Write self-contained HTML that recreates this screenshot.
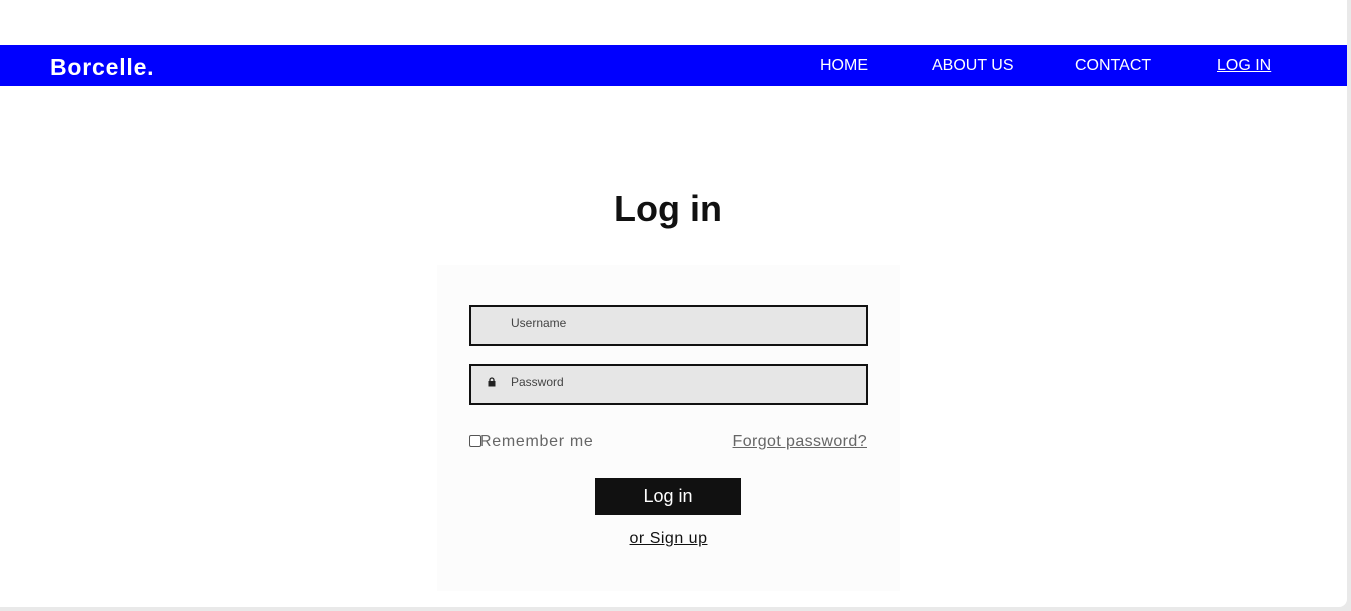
<!DOCTYPE html>
<html><head><style>
body{margin:0;width:1351px;height:611px;background:#e9e9e9;font-family:"Liberation Sans",sans-serif;overflow:hidden;position:relative}
.page{position:absolute;left:0;top:0;width:1347px;height:607px;background:#fff;border-bottom-right-radius:8px;overflow:hidden}
.nav{position:absolute;top:45px;left:0;width:1347px;height:41px;background:#0000ff;color:#fff}
.logo{position:absolute;left:50px;top:9px;font-weight:bold;font-size:23px;letter-spacing:0.8px}
.nav a{position:absolute;top:12px;font-size:16px;color:#fff;text-decoration:none}
h1{position:absolute;top:188px;left:0;width:1336px;margin:0;text-align:center;font-size:36px;font-weight:bold;color:#111}
.card{position:absolute;left:437px;top:265px;width:463px;height:326px;background:#fcfcfc}
.inp{position:absolute;left:32px;width:395px;height:37px;border:2px solid #111;background:#e6e6e6;font-size:12px;color:#444}
.inp span{position:absolute;left:40px;top:9px}
.row{position:absolute;top:168px;font-size:16px;color:#666;letter-spacing:0.4px}
.btn{position:absolute;left:158px;top:213px;width:146px;height:37px;background:#111;color:#fff;font-size:18px;text-align:center;line-height:37px}
.su{position:absolute;top:265px;left:0;width:463px;text-align:center;font-size:16px;color:#111;text-decoration:underline;letter-spacing:0.5px}
</style></head><body>
<div class="page">
<div class="nav"><div class="logo">Borcelle.</div>
<a style="left:820px">HOME</a><a style="left:932px">ABOUT US</a><a style="left:1075px">CONTACT</a><a style="left:1217px;text-decoration:underline">LOG IN</a></div>
<h1>Log in</h1>
<div class="card">
<div class="inp" style="top:40px"><span>Username</span></div>
<div class="inp" style="top:99px"><svg style="position:absolute;left:17px;top:11px" width="8" height="10" viewBox="0 0 8 10"><path d="M2 4V3a2 2 0 0 1 4 0v1" stroke="#222" stroke-width="1.3" fill="none"/><rect x="0.5" y="4" width="7" height="5.5" fill="#222"/></svg><span>Password</span></div>
<div class="row" style="left:32px;letter-spacing:0.7px"><span style="display:inline-block;width:10px;height:10px;border:1px solid #555;border-radius:2px;vertical-align:-1px;background:#fff;margin-right:-1px"></span>Remember me</div>
<div class="row" style="right:33px;text-decoration:underline">Forgot password?</div>
<div class="btn">Log in</div>
<div class="su">or Sign up</div>
</div>
</div>
</body></html>
